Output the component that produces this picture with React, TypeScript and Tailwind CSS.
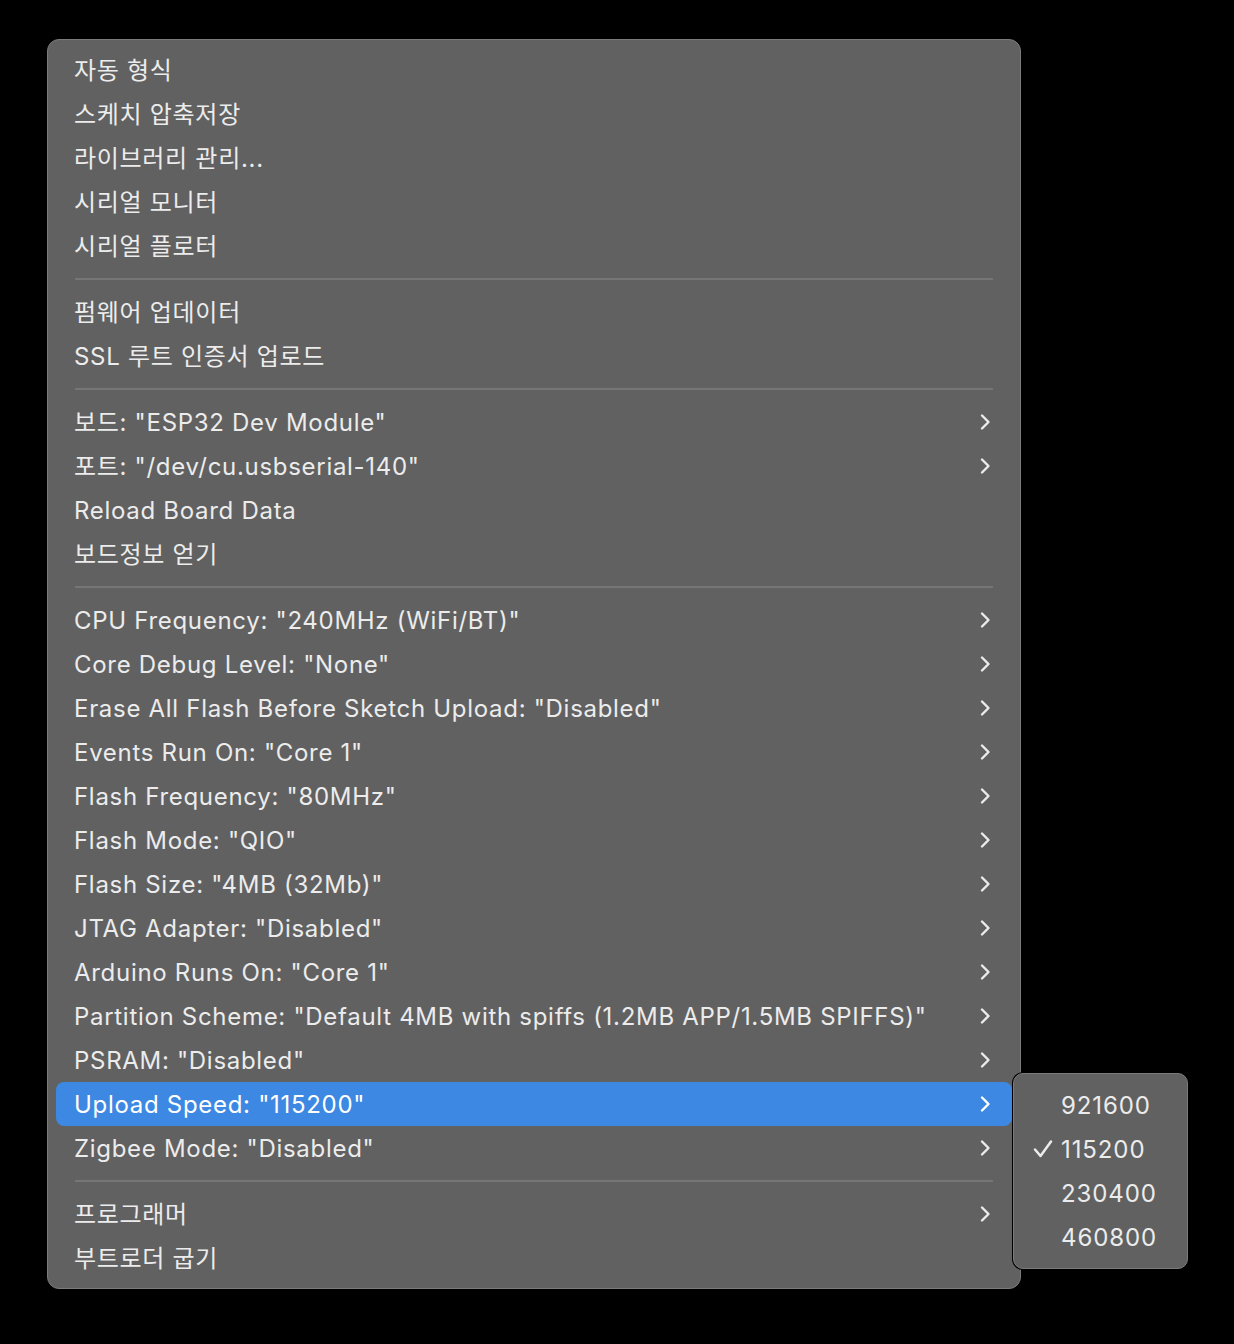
import React from "react";

type Row = { label: string; sub?: boolean; active?: boolean } | "sep";

const rows: Row[] = [
  { label: "자동 형식" },
  { label: "스케치 압축저장" },
  { label: "라이브러리 관리..." },
  { label: "시리얼 모니터" },
  { label: "시리얼 플로터" },
  "sep",
  { label: "펌웨어 업데이터" },
  { label: "SSL 루트 인증서 업로드" },
  "sep",
  { label: '보드: "ESP32 Dev Module"', sub: true },
  { label: '포트: "/dev/cu.usbserial-140"', sub: true },
  { label: "Reload Board Data" },
  { label: "보드정보 얻기" },
  "sep",
  { label: 'CPU Frequency: "240MHz (WiFi/BT)"', sub: true },
  { label: 'Core Debug Level: "None"', sub: true },
  { label: 'Erase All Flash Before Sketch Upload: "Disabled"', sub: true },
  { label: 'Events Run On: "Core 1"', sub: true },
  { label: 'Flash Frequency: "80MHz"', sub: true },
  { label: 'Flash Mode: "QIO"', sub: true },
  { label: 'Flash Size: "4MB (32Mb)"', sub: true },
  { label: 'JTAG Adapter: "Disabled"', sub: true },
  { label: 'Arduino Runs On: "Core 1"', sub: true },
  { label: 'Partition Scheme: "Default 4MB with spiffs (1.2MB APP/1.5MB SPIFFS)"', sub: true },
  { label: 'PSRAM: "Disabled"', sub: true },
  { label: 'Upload Speed: "115200"', sub: true, active: true },
  { label: 'Zigbee Mode: "Disabled"', sub: true },
  "sep",
  { label: "프로그래머", sub: true },
  { label: "부트로더 굽기" },
];

const speeds = ["921600", "115200", "230400", "460800"];

function Chevron() {
  return (
    <svg width="12" height="18" viewBox="0 0 12 18" fill="none">
      <path d="M3 2.5 L9.5 9 L3 15.5" stroke="currentColor" strokeWidth="2.4" strokeLinecap="round" strokeLinejoin="round" />
    </svg>
  );
}

function Check() {
  return (
    <svg width="20" height="20" viewBox="0 0 20 20" fill="none">
      <path d="M2 10.5 L7.5 17 L18 2.5" stroke="currentColor" strokeWidth="2.5" strokeLinecap="round" strokeLinejoin="round" />
    </svg>
  );
}

export default function App() {
  return (
    <div
      className="min-h-[1344px] w-[1234px] bg-black pt-[39px] pl-[47px] text-[#ececec]"
      style={{ fontFamily: 'Inter, "Noto Sans CJK KR", sans-serif' }}
    >
      <div className="relative w-[974px]">
        {/* 메인 메뉴 */}
        <div className="rounded-[12px] border border-[#7b7b7b] bg-[#616161] px-[8px] py-[8px] shadow-[0_0_0_1px_#000]">
          {rows.map((r, i) =>
            r === "sep" ? (
              <div key={i} className="flex h-[22px] items-center px-[19px]">
                <div className="h-[2px] w-full bg-[#767676]" />
              </div>
            ) : (
              <div
                key={i}
                className={`flex h-[44px] items-center justify-between rounded-[8px] pl-[18px] pr-[21px] text-[24px] leading-none tracking-[0.7px] ${
                  r.active ? "bg-[#3d88e2] text-white" : ""
                }`}
              >
                <span className="pt-[2px]">{r.label}</span>
                {r.sub && <Chevron />}
              </div>
            )
          )}
        </div>

        {/* 서브 메뉴 */}
        <div className="absolute left-[966px] top-[1034px] w-[175px] rounded-[10px] border border-[#7b7b7b] bg-[#616161] py-[9px] shadow-[0_0_0_1px_#000]">
          {speeds.map((s, i) => (
            <div key={s} className="flex h-[44px] items-center pl-[19px] text-[24px] leading-none tracking-[0.9px]">
              <span className="flex w-[28px] items-center">{i === 1 && <Check />}</span>
              <span className="pt-[2px]">{s}</span>
            </div>
          ))}
        </div>
      </div>
    </div>
  );
}
